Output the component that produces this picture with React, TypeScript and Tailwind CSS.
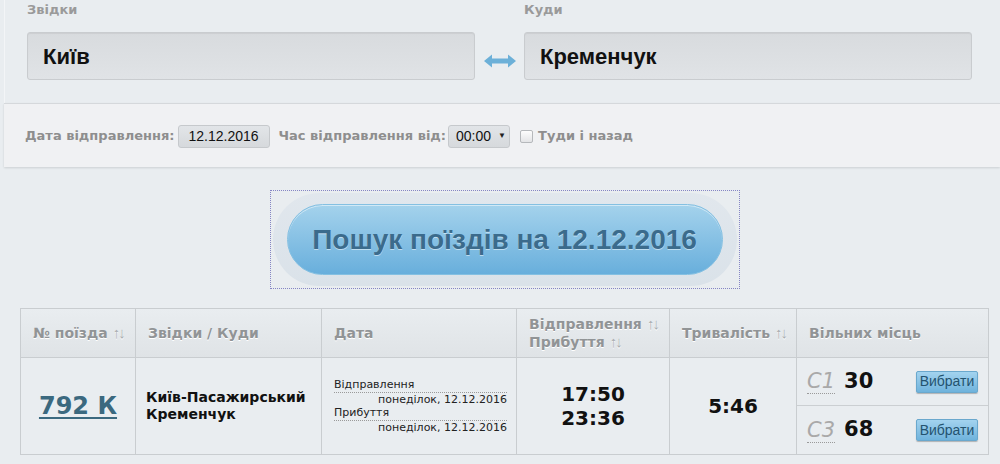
import React from 'react'

const verdana = "font-['DejaVu_Sans',Verdana,sans-serif]"
const arial = "font-['Liberation_Sans',Arial,sans-serif]"

function SwapArrow() {
  return (
    <svg width="32" height="14" viewBox="0 0 32 14" className="block">
      <path d="M0 7 L8 0.5 L8 4.5 L24 4.5 L24 0.5 L32 7 L24 13.5 L24 9.5 L8 9.5 L8 13.5 Z" fill="#6cb0d8" />
    </svg>
  )
}

function SortMark() {
  return <span className={`${arial} font-normal text-[#a9adb0] text-[15px] ml-[5px] tracking-[-2px]`}>↑↓</span>
}

function CityInput({ label, value }: { label: string; value: string }) {
  return (
    <div className="w-[448px]">
      <div className={`${verdana} text-[13px] font-bold text-[#9a9a9a] leading-[16px] h-[32px] pt-[2px]`}>{label}</div>
      <div className="h-[48px] rounded-[3px] border border-[#c9cccf] bg-gradient-to-b from-[#d8dbde] to-[#e0e3e6] flex items-center pl-[15px] shadow-[inset_0_1px_1px_rgba(0,0,0,0.06)]">
        <span className={`${arial} text-[22px] font-bold text-[#111]`}>{value}</span>
      </div>
    </div>
  )
}

function SeatRow({ cls, count, last }: { cls: string; count: string; last?: boolean }) {
  return (
    <div className={`h-[48px] flex items-center pl-[10px] pr-[10px] ${last ? '' : 'border-b border-[#cbcfd2]'}`}>
      <span className={`${verdana} italic text-[21px] text-[#a9a9a9] border-b border-dotted border-[#9a9a9a] leading-[24px]`}>{cls}</span>
      <span className={`${verdana} font-bold text-[21px] text-[#111] ml-[9px]`}>{count}</span>
      <button className="ml-auto h-[22px] w-[62px] rounded-[2px] border border-[#6aa8cd] bg-gradient-to-b from-[#a3d3ef] to-[#6fb3dc] shadow-[0_1px_1px_rgba(0,0,0,0.25)] flex items-center justify-center">
        <span className={`${arial} text-[14px] text-[#24536f]`}>Вибрати</span>
      </button>
    </div>
  )
}

export default function App() {
  const th = `${verdana} text-[14px] font-bold text-[#919496] text-left align-middle px-[12px] border border-[#c9cdd0] whitespace-nowrap [text-shadow:0_1px_0_#fff]`
  const td = 'border border-[#c9cdd0] align-middle'

  return (
    <div className="w-[1000px] h-[464px] overflow-hidden bg-[#e9edf0]">
      {/* Top: from / to */}
      <div className="ml-[4px] border-l border-[#f3f5f7] h-[103px] pl-[22px] flex items-start">
        <CityInput label="Звідки" value="Київ" />
        <div className="w-[49px] h-[80px] flex items-end justify-center pb-[12px]">
          <SwapArrow />
        </div>
        <CityInput label="Куди" value="Кременчук" />
      </div>

      {/* Filters */}
      <div className="ml-[4px] h-[64px] bg-[#f0f1f3] border-t border-[#d5d8db] shadow-[0_1px_2px_rgba(0,0,0,0.12)] flex items-center pl-[21px] pt-[1px]">
        <span className={`${verdana} text-[13px] font-bold text-[#8e8e8e]`}>Дата відправлення:</span>
        <div className={`${arial} ml-[3px] w-[92px] h-[23px] rounded-[3px] border border-[#c6c9cc] bg-gradient-to-b from-[#e2e5e8] to-[#d6d9dc] text-[14px] text-[#111] flex items-center justify-center`}>
          12.12.2016
        </div>
        <span className={`${verdana} ml-[9px] text-[13px] font-bold text-[#8e8e8e]`}>Час відправлення від:</span>
        <div className={`${arial} ml-[2px] w-[62px] h-[23px] rounded-[3px] border border-[#c6c9cc] bg-gradient-to-b from-[#e2e5e8] to-[#d6d9dc] text-[14px] text-[#111] flex items-center pl-[7px]`}>
          00:00
          <span className="text-[8px] ml-[7px] text-[#222]">▼</span>
        </div>
        <div className="ml-[10px] w-[13px] h-[13px] rounded-[2px] border border-[#b5b8bb] bg-gradient-to-b from-[#fdfdfd] to-[#e3e4e6]" />
        <span className={`${verdana} ml-[5px] text-[13px] font-bold text-[#8e8e8e]`}>Туди і назад</span>
      </div>

      {/* Search button */}
      <div className="mt-[23px] flex justify-center pl-[9px]">
        <div className="border border-dotted border-[#8585c4] p-[2px]">
          <div className="rounded-full bg-gradient-to-b from-[#e1e7ed] to-[#dae2e9] px-[14px] py-[11px]">
            <button className="w-[436px] h-[71px] rounded-full border border-[#84c0e2] bg-gradient-to-b from-[#a4d2ec] to-[#68afdc] shadow-[inset_0_1px_0_rgba(255,255,255,0.5)] flex items-center justify-center">
              <span className={`${arial} text-[28px] font-bold text-[#3b6b8c] [text-shadow:0_1px_0_rgba(255,255,255,0.5)]`}>
                Пошук поїздів на 12.12.2016
              </span>
            </button>
          </div>
        </div>
      </div>

      {/* Results table */}
      <table className="ml-[20px] mt-[19px] w-[968px] table-fixed border-collapse">
        <colgroup>
          <col className="w-[115px]" />
          <col className="w-[186px]" />
          <col className="w-[195px]" />
          <col className="w-[153px]" />
          <col className="w-[127px]" />
          <col className="w-[192px]" />
        </colgroup>
        <thead>
          <tr className="h-[49px] bg-gradient-to-b from-[#e9edf0] to-[#dfe3e6]">
            <th className={th}>№ поїзда<SortMark /></th>
            <th className={th}>Звідки / Куди</th>
            <th className={th}>Дата</th>
            <th className={`${th} leading-[17px]`}>
              Відправлення<SortMark />
              <br />
              Прибуття<SortMark />
            </th>
            <th className={th}>Тривалість<SortMark /></th>
            <th className={th}>Вільних місць</th>
          </tr>
        </thead>
        <tbody>
          <tr className="h-[96px] bg-[#e9edf0]">
            <td className={`${td} text-center`}>
              <a className={`${verdana} text-[24px] font-bold text-[#3b697f] underline underline-offset-[3px]`}>792 К</a>
            </td>
            <td className={`${td} px-[10px]`}>
              <div className={`${verdana} text-[14px] font-bold text-[#111] leading-[17px]`}>
                Київ-Пасажирський
                <br />
                Кременчук
              </div>
            </td>
            <td className={`${td} pl-[12px] pr-[9px]`}>
              <div className={`${verdana} text-[11px] text-[#222] leading-[13.5px]`}>
                <div className="border-b border-dotted border-[#9a9a9a]">Відправлення</div>
                <div className="text-right">понеділок, 12.12.2016</div>
                <div className="border-b border-dotted border-[#9a9a9a]">Прибуття</div>
                <div className="text-right">понеділок, 12.12.2016</div>
              </div>
            </td>
            <td className={`${td} text-center`}>
              <div className={`${verdana} text-[20px] font-bold text-[#111] leading-[24px]`}>
                17:50
                <br />
                23:36
              </div>
            </td>
            <td className={`${td} text-center`}>
              <span className={`${verdana} text-[20px] font-bold text-[#111]`}>5:46</span>
            </td>
            <td className={`${td} p-0`}>
              <SeatRow cls="С1" count="30" />
              <SeatRow cls="С3" count="68" last />
            </td>
          </tr>
        </tbody>
      </table>
    </div>
  )
}
